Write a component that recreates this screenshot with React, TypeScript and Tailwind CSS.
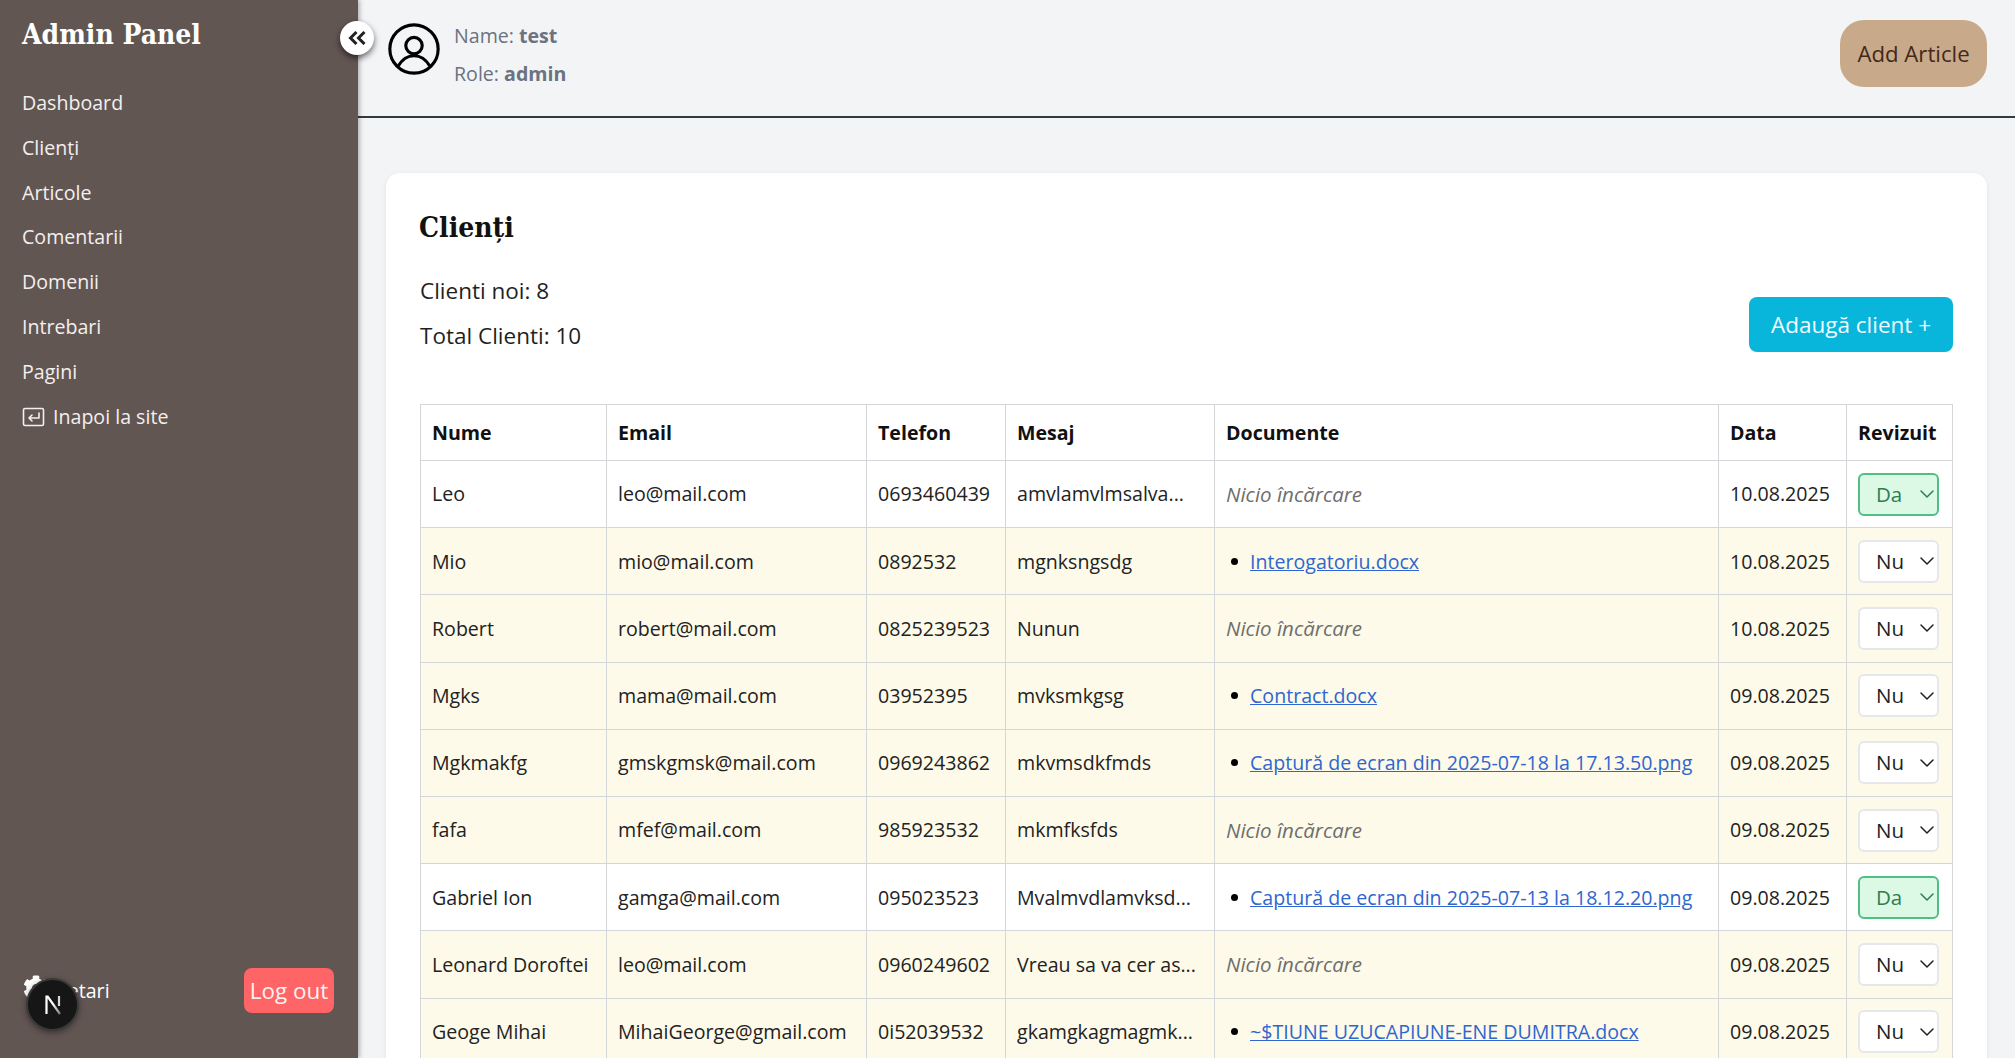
import { FaCog } from "react-icons/fa";
import { ChevronDown } from "lucide-react";

const sans = "font-['Open_Sans',sans-serif]";
const serif = "font-['DejaVu_Serif_Condensed','DejaVu_Serif',serif]";

const navItems = ["Dashboard", "Clienți", "Articole", "Comentarii", "Domenii", "Intrebari", "Pagini"];

const rows = [
  { nume: "Leo", email: "leo@mail.com", tel: "0693460439", mesaj: "amvlamvlmsalva...", doc: "", data: "10.08.2025", rev: true },
  { nume: "Mio", email: "mio@mail.com", tel: "0892532", mesaj: "mgnksngsdg", doc: "Interogatoriu.docx", data: "10.08.2025", rev: false },
  { nume: "Robert", email: "robert@mail.com", tel: "0825239523", mesaj: "Nunun", doc: "", data: "10.08.2025", rev: false },
  { nume: "Mgks", email: "mama@mail.com", tel: "03952395", mesaj: "mvksmkgsg", doc: "Contract.docx", data: "09.08.2025", rev: false },
  { nume: "Mgkmakfg", email: "gmskgmsk@mail.com", tel: "0969243862", mesaj: "mkvmsdkfmds", doc: "Captură de ecran din 2025-07-18 la 17.13.50.png", data: "09.08.2025", rev: false },
  { nume: "fafa", email: "mfef@mail.com", tel: "985923532", mesaj: "mkmfksfds", doc: "", data: "09.08.2025", rev: false },
  { nume: "Gabriel Ion", email: "gamga@mail.com", tel: "095023523", mesaj: "Mvalmvdlamvksd...", doc: "Captură de ecran din 2025-07-13 la 18.12.20.png", data: "09.08.2025", rev: true },
  { nume: "Leonard Doroftei", email: "leo@mail.com", tel: "0960249602", mesaj: "Vreau sa va cer as...", doc: "", data: "09.08.2025", rev: false },
  { nume: "Geoge Mihai", email: "MihaiGeorge@gmail.com", tel: "0i52039532", mesaj: "gkamgkagmagmk...", doc: "~$TIUNE UZUCAPIUNE-ENE DUMITRA.docx", data: "09.08.2025", rev: false },
];

const headers = [
  { label: "Nume", w: "w-[186px]" },
  { label: "Email", w: "w-[260px]" },
  { label: "Telefon", w: "w-[139px]" },
  { label: "Mesaj", w: "w-[209px]" },
  { label: "Documente", w: "w-[504px]" },
  { label: "Data", w: "w-[128px]" },
  { label: "Revizuit", w: "w-[106px]" },
];

function ReviewSelect({ value }: { value: boolean }) {
  return (
    <div
      className={`flex h-[43px] w-[81px] items-center justify-between rounded-[6px] border-2 pl-[16px] text-[20.5px] ${
        value ? "border-[#4fbf83] bg-[#dcf9e6] text-[#2f7d50]" : "border-[#e5e7eb] bg-white text-[#222222]"
      }`}
    >
      <span>{value ? "Da" : "Nu"}</span>
      <ChevronDown size={24} strokeWidth={1.5} className="-mr-[2px]" />
    </div>
  );
}

export default function App() {
  return (
    <div className={`${sans} flex h-screen overflow-hidden bg-[#f3f4f6] text-[19.6px] text-[#222222]`}>
      {/* Sidebar */}
      <aside className="relative flex w-[358px] shrink-0 flex-col bg-[#625653] px-[22px] text-white shadow-[2px_0_4px_rgba(0,0,0,0.25)]">
        <h1 className={`${serif} mt-[16px] text-[28px] font-bold leading-[38px]`}>Admin Panel</h1>
        <nav className="mt-[35px] flex flex-col gap-[16.8px] leading-[28px] text-[#f3efed]">
          {navItems.map((item) => (
            <a key={item}>{item}</a>
          ))}
          <a className="flex items-center gap-[8px]">
            <svg width="23" height="20" viewBox="0 0 23 20" fill="none" stroke="currentColor" strokeWidth="1.6">
              <rect x="1.5" y="1.5" width="20" height="17" rx="1.5" />
              <path d="M17 6v5H7M10 8l-3 3 3 3" strokeLinecap="round" strokeLinejoin="round" />
            </svg>
            Inapoi la site
          </a>
        </nav>
        <div className="mt-auto mb-[45px] mr-[2px] flex items-center justify-between">
          <a className="flex items-center gap-[8px]">
            <FaCog size={26} className="-mt-[4px] ml-[1px]" />
            Setari
          </a>
          <button className="h-[45px] w-[90px] rounded-[8px] bg-[#ff6467] text-center text-[22.4px] text-[#fff3f0]">Log out</button>
        </div>

        {/* collapse toggle */}
        <button className="absolute left-[340px] top-[21px] flex h-[34px] w-[34px] items-center justify-center rounded-full bg-white text-[#222222] shadow-[0_3px_6px_rgba(0,0,0,0.6)]">
          <svg width="18" height="14" viewBox="0 0 18 14" fill="none" stroke="currentColor" strokeWidth="3">
            <path d="M8.5 1 2.5 7l6 6M16.5 1l-6 6 6 6" />
          </svg>
        </button>

        {/* next dev indicator */}
        <div className="absolute left-[26px] top-[978px] flex h-[53px] w-[53px] items-center justify-center rounded-full border-2 border-[#3a3a3a] bg-[#161616] shadow-[0_2px_6px_rgba(0,0,0,0.4)]">
          <svg width="22" height="22" viewBox="0 0 22 22">
            <defs>
              <linearGradient id="nfade" x1="0" y1="0" x2="1" y2="1">
                <stop offset="0.45" stopColor="#ffffff" />
                <stop offset="1" stopColor="#777777" />
              </linearGradient>
            </defs>
            <path d="M4.5 20V2.5h1.2L18 20" fill="none" stroke="url(#nfade)" strokeWidth="2.2" />
            <path d="M17 2v10" stroke="#d8d8d8" strokeWidth="2.2" />
          </svg>
        </div>
      </aside>

      <div className="flex min-w-0 flex-1 flex-col">
        {/* Top bar */}
        <header className="flex h-[118px] shrink-0 items-center justify-between border-b-2 border-[#333a42] pl-[27px] pr-[28px]">
          <div className="-mt-[6px] flex items-center gap-[11px]">
            <svg width="58" height="58" viewBox="0 0 24 24" fill="none" stroke="#000000" strokeWidth="1.3" className="-mt-[12px]">
              <circle cx="12" cy="12" r="10" />
              <circle cx="12" cy="10.6" r="3.4" />
              <path d="M5.5 19c1.5-2.5 3.8-4.2 6.5-4.2s5 1.7 6.5 4.2" />
            </svg>
            <div className="text-[#6b7280]">
              <p className="leading-[38.5px]">
                Name: <b className="font-bold">test</b>
              </p>
              <p className="leading-[38.5px]">
                Role: <b className="font-bold">admin</b>
              </p>
            </div>
          </div>
          <button className="-mt-[9px] h-[67px] w-[147px] rounded-[24px] bg-[#c8a98a] text-[22.2px] text-[#42291a]">Add Article</button>
        </header>

        {/* Content */}
        <main className="mt-[55px] ml-[28px] mr-[28px] flex-1 rounded-t-[14px] bg-white px-[34px] pt-[32px] shadow-[0_1px_4px_rgba(0,0,0,0.08)]">
          <h2 className={`${serif} -ml-[1px] text-[28px] font-bold leading-[46px] text-[#111111]`}>Clienți</h2>
          <div className="mt-[17px] flex items-end justify-between text-[22.5px] text-[#1f1f1f]">
            <div>
              <p className="leading-[45px]">Clienti noi: 8</p>
              <p className="leading-[45px]">Total Clienti: 10</p>
            </div>
            <button className="mb-[6px] h-[55px] w-[204px] rounded-[8px] bg-[#08b6dc] text-[22.5px] text-[#f0fbff]">Adaugă client +</button>
          </div>

          <table className="mt-[46px] w-[1532px] table-fixed border-collapse text-[19.6px]">
            <thead>
              <tr className="h-[56px]">
                {headers.map((h) => (
                  <th key={h.label} className={`${h.w} border border-[#d4d6da] px-[11px] text-left font-bold text-[#111111]`}>
                    {h.label}
                  </th>
                ))}
              </tr>
            </thead>
            <tbody>
              {rows.map((r) => (
                <tr key={r.nume} className={`h-[67.2px] ${r.rev ? "bg-white" : "bg-[#fdfae9]"}`}>
                  <td className="border border-[#d4d6da] px-[11px] whitespace-nowrap">{r.nume}</td>
                  <td className="border border-[#d4d6da] px-[11px] whitespace-nowrap">{r.email}</td>
                  <td className="border border-[#d4d6da] px-[11px] whitespace-nowrap">{r.tel}</td>
                  <td className="border border-[#d4d6da] px-[11px] whitespace-nowrap">{r.mesaj}</td>
                  <td className="border border-[#d4d6da] px-[11px] whitespace-nowrap">
                    {r.doc ? (
                      <div className="flex items-center gap-[12px] pl-[5px]">
                        <span className="h-[7px] w-[7px] shrink-0 rounded-full bg-black" />
                        <a className="text-[#2f66cf] underline">{r.doc}</a>
                      </div>
                    ) : (
                      <span className="text-[20.5px] italic text-[#6e6e6e]">Nicio încărcare</span>
                    )}
                  </td>
                  <td className="border border-[#d4d6da] px-[11px] whitespace-nowrap">{r.data}</td>
                  <td className="border border-[#d4d6da] px-[11px]">
                    <ReviewSelect value={r.rev} />
                  </td>
                </tr>
              ))}
            </tbody>
          </table>
        </main>
      </div>
    </div>
  );
}
